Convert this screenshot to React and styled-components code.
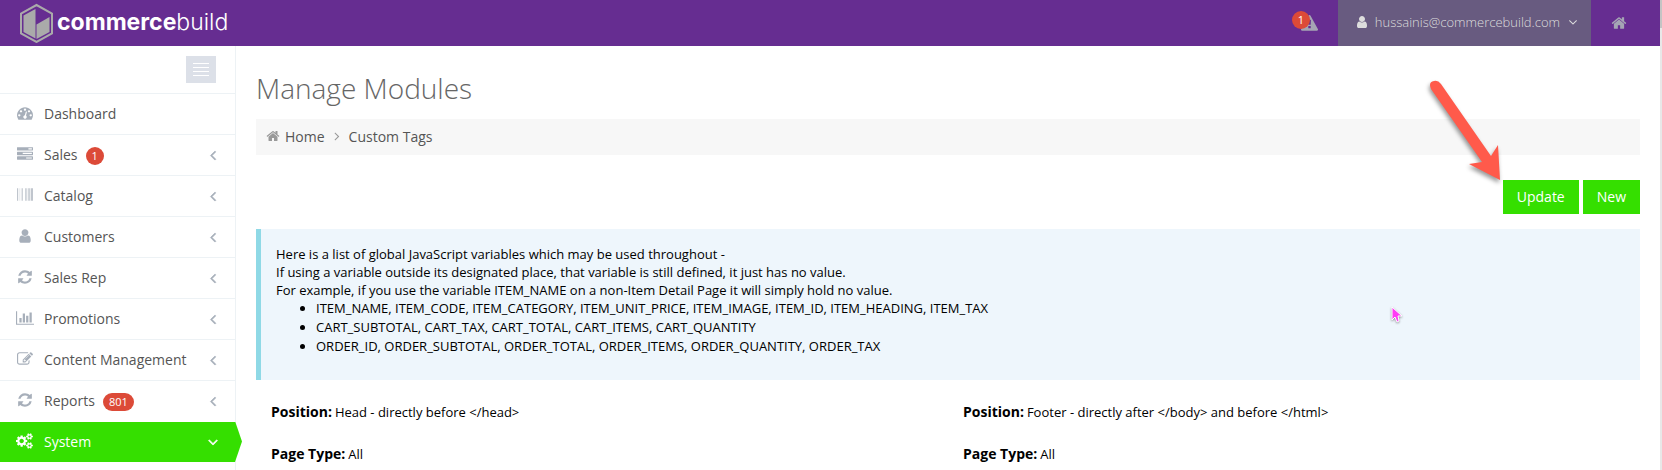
import React from "react";
import styled, { createGlobalStyle, css } from "styled-components";

const GlobalStyle = createGlobalStyle`
    * {
        box-sizing: border-box;
    }
    body {
        margin: 0;
        background-color: #fff;
        color: #000;
        font-family: "Open Sans", sans-serif;
        font-size: 13px;
        overflow: hidden;
    }
    a {
        color: inherit;
        text-decoration: none;
    }
    ul {
        list-style: none;
        margin: 0;
        padding: 0;
    }
`;

const Page = styled.div`
    display: grid;
    grid-template-columns: 1fr 2px;
    min-height: 100vh;
`;
const ScrollTrack = styled.div`
    background-color: #e8e8e8;
`;
const ScrollThumb = styled.div`
    height: 28px;
    background-color: #c4c4c4;
`;
const Header = styled.header`
    display: flex;
    align-items: center;
    height: 46px;
    padding-left: 19px;
    background-color: #662d91;
`;
const Logo = styled.a`
    display: flex;
    align-items: center;
    gap: 3px;
    height: 46px;
    color: #fff;
    font-family: Inter, sans-serif;
    font-size: 23px;
    font-weight: 300;
    line-height: 40px;
`;
const LogoText = styled.span`
    height: 42px;
`;
const LogoStrong = styled.b`
    font-weight: 700;
`;
const TopMenu = styled.nav`
    display: flex;
    margin-left: auto;
    height: 46px;
`;
const AlertLink = styled.a`
    position: relative;
    display: flex;
    align-items: center;
    padding: 0 20px;
    color: #a5a5b4;
`;
const AlertBadge = styled.span`
    position: absolute;
    top: 11px;
    left: 11px;
    width: 18px;
    height: 18px;
    border-radius: 9px;
    background-color: #dc4a38;
    color: #fff;
    font-size: 11px;
    line-height: 18px;
    text-align: center;
`;
const UserButton = styled.button`
    display: flex;
    align-items: center;
    gap: 6px;
    padding: 0 11px 2px 17px;
    border: 0;
    background-color: #685b80;
    color: #ddd;
    font-family: inherit;
    font-size: 13px;
    font-weight: 300;
`;
const HomeLink = styled.a`
    display: flex;
    align-items: center;
    padding: 0 33px 0 20px;
    color: #a5a5b4;
`;
const Body = styled.div`
    display: flex;
`;
const Sidebar = styled.aside`
    flex: 0 0 236px;
    border-right: 1px solid #edf2f5;
    min-height: calc(100vh - 46px);
`;
const TogglerRow = styled.div`
    display: flex;
    justify-content: flex-end;
    padding: 10px 19px 10px 0;
`;
const Toggler = styled.button`
    display: flex;
    flex-direction: column;
    justify-content: center;
    align-items: center;
    gap: 3px;
    width: 30px;
    height: 27px;
    padding: 0;
    border: 0;
    background-color: #dce0e8;
`;
const TogglerBar = styled.span`
    width: 16px;
    height: 1px;
    background-color: #fff;
`;
const MenuItem = styled.li`
    border-top: 1px solid #edf2f5;
    ${props => props.$active && css`
        margin-right: -7px;
        border-top-color: #fff;
        background: #35df00;
        background-clip: padding-box;
        clip-path: polygon(0 0, calc(100% - 7px) 0, 100% 50%, calc(100% - 7px) 100%, 0 100%);
    `}
`;
const MenuLink = styled.a`
    display: flex;
    align-items: center;
    height: 40px;
    padding: 0 ${props => (props.$active ? 21 : 14)}px 2px 17px;
    color: ${props => (props.$active ? "#fff" : "#555")};
    font-size: 14px;
`;
const MenuIcon = styled.span`
    display: flex;
    justify-content: center;
    width: 16px;
    margin-right: 11px;
    color: ${props => (props.$active ? "#fff" : "#a7afba")};
`;
const MenuBadge = styled.span`
    min-width: 18px;
    height: 18px;
    margin: 4px 0 0 8px;
    padding: 0 6px;
    border-radius: 9px;
    background-color: #dc4a38;
    color: #fff;
    font-size: 11px;
    line-height: 18px;
    text-align: center;
`;
const MenuArrow = styled.span`
    display: flex;
    margin-left: auto;
    padding-top: 2px;
    color: ${props => (props.$active ? "#fff" : "#a7afba")};
    stroke: currentColor;
    stroke-width: 70px;
`;
const Content = styled.main`
    flex: 1;
    min-width: 0;
    padding: 22px 20px 0;
`;
const Title = styled.h1`
    margin: 0 0 11px;
    color: #666;
    font-size: 28px;
    font-weight: 300;
    line-height: 40px;
`;
const Breadcrumb = styled.nav`
    display: flex;
    align-items: center;
    height: 36px;
    padding: 0 10px 2px;
    background-color: #f7f7f7;
    color: #999;
`;
const Crumb = styled.a`
    margin: 0 5px;
    color: #555;
    font-size: 14px;
`;
const Actions = styled.div`
    display: flex;
    justify-content: flex-end;
    gap: 4px;
    margin: 25px 0 15px;
`;
const Button = styled.button`
    height: 34px;
    padding: 0 14px 2px;
    border: 0;
    background-color: #35df00;
    color: #fff;
    font-family: inherit;
    font-size: 14px;
    font-weight: 500;
`;
const Note = styled.section`
    margin-bottom: 22px;
    padding: 16px 15px 24px;
    border-left: 5px solid #8fd9e6;
    background-color: #eef6fc;
`;
const NoteText = styled.p`
    margin: 0;
    line-height: 18px;
`;
const NoteList = styled.ul`
    padding-left: 40px;
    list-style: disc;
    line-height: 19px;
`;
const Columns = styled.div`
    display: grid;
    grid-template-columns: 1fr 1fr;
`;
const Column = styled.dl`
    display: grid;
    gap: 22px;
    margin: 0;
    padding: 0 15px;
    line-height: 20px;
`;
const Field = styled.div`
    display: flex;
    align-items: baseline;
    gap: 3px;
`;
const FieldName = styled.dt`
    font-size: 14px;
    font-weight: 700;
`;
const FieldValue = styled.dd`
    margin: 0;
`;
const ArrowMark = styled.svg`
    position: absolute;
    top: 76px;
    right: 147px;
    filter: drop-shadow(-1px 3px 2px rgba(0, 0, 0, 0.4));
    pointer-events: none;
`;
const Pointer = styled.svg`
    position: absolute;
    top: 306px;
    right: 259px;
    filter: drop-shadow(0 1px 1px rgba(0, 0, 0, 0.4));
    pointer-events: none;
`;

const paths = {
    dashboard: "M384 1152q0-53-37.5-90.5t-90.5-37.5-90.5 37.5-37.5 90.5 37.5 90.5 90.5 37.5 90.5-37.5 37.5-90.5zm192-448q0-53-37.5-90.5t-90.5-37.5-90.5 37.5-37.5 90.5 37.5 90.5 90.5 37.5 90.5-37.5 37.5-90.5zm428 481l101-382q6-26-7.5-48.5t-38.5-29.5-48 6.5-30 39.5l-101 382q-60 5-107 43.5t-63 98.5q-20 77 20 146t117 89 146-20 89-117q16-60-6-117t-72-91zm660-33q0-53-37.5-90.5t-90.5-37.5-90.5 37.5-37.5 90.5 37.5 90.5 90.5 37.5 90.5-37.5 37.5-90.5zm-640-640q0-53-37.5-90.5t-90.5-37.5-90.5 37.5-37.5 90.5 37.5 90.5 90.5 37.5 90.5-37.5 37.5-90.5zm448 192q0-53-37.5-90.5t-90.5-37.5-90.5 37.5-37.5 90.5 37.5 90.5 90.5 37.5 90.5-37.5 37.5-90.5zm320 448q0 261-141 483-19 29-54 29h-1402q-35 0-54-29-141-221-141-483 0-182 71-348t191-286 286-191 348-71 348 71 286 191 191 286 71 348z",
    tasks: "M1024 1408h640v-128h-640v128zm-384-512h1024v-128h-1024v128zm640-512h384v-128h-384v128zm512 832v256q0 26-19 45t-45 19h-1664q-26 0-45-19t-19-45v-256q0-26 19-45t45-19h1664q26 0 45 19t19 45zm0-512v256q0 26-19 45t-45 19h-1664q-26 0-45-19t-19-45v-256q0-26 19-45t45-19h1664q26 0 45 19t19 45zm0-512v256q0 26-19 45t-45 19h-1664q-26 0-45-19t-19-45v-256q0-26 19-45t45-19h1664q26 0 45 19t19 45z",
    barcode: "M63 1536h-63v-1408h63v1408zm63-1h-32v-1407h32v1407zm220 0h-31v-1407h31v1407zm157 0h-31v-1407h31v1407zm157 0h-62v-1407h62v1407zm315 0h-62v-1407h62v1407zm158 0h-63v-1407h63v1407zm157 0h-63v-1407h63v1407zm157 0h-63v-1407h63v1407zm189 0h-94v-1407h94v1407zm62 0h-31v-1407h31v1407zm94 1h-62v-1408h62v1408z",
    user: "M1536 1399q0 109-62.5 187t-150.5 78h-854q-88 0-150.5-78t-62.5-187q0-85 8.5-160.5t31.5-152 58.5-131 94-89 134.5-34.5q131 128 313 128t313-128q76 0 134.5 34.5t94 89 58.5 131 31.5 152 8.5 160.5zm-256-887q0 159-112.5 271.5t-271.5 112.5-271.5-112.5-112.5-271.5 112.5-271.5 271.5-112.5 271.5 112.5 112.5 271.5z",
    refresh: "M1639 1056q0 5-1 7-64 268-268 434.5t-478 166.5q-146 0-282.5-55t-243.5-157l-129 129q-19 19-45 19t-45-19-19-45v-448q0-26 19-45t45-19h448q26 0 45 19t19 45-19 45l-137 137q71 66 161 102t187 36q134 0 250-65t186-179q11-17 53-117 8-23 30-23h192q13 0 22.5 9.5t9.5 22.5zm25-800v448q0 26-19 45t-45 19h-448q-26 0-45-19t-19-45 19-45l138-138q-148-137-349-137-134 0-250 65t-186 179q-11 17-53 117-8 23-30 23h-199q-13 0-22.5-9.5t-9.5-22.5v-7q65-268 270-434.5t480-166.5q146 0 284 55.5t245 156.5l130-129q19-19 45-19t45 19 19 45z",
    chart: "M640 896v512h-256v-512h256zm384-512v1024h-256v-1024h256zm1024 1152v128h-2048v-1536h128v1408h1920zm-640-896v768h-256v-768h256zm384-384v1152h-256v-1152h256z",
    edit: "M888 1184l116-116-152-152-116 116v56h96v96h56zm440-720q-16-16-33 1l-350 350q-17 17-1 33t33-1l350-350q17-17 1-33zm80 594v190q0 119-84.5 203.5t-203.5 84.5h-832q-119 0-203.5-84.5t-84.5-203.5v-832q0-119 84.5-203.5t203.5-84.5h832q63 0 117 25 15 7 18 23 3 17-9 29l-49 49q-14 14-32 8-23-6-45-6h-832q-66 0-113 47t-47 113v832q0 66 47 113t113 47h832q66 0 113-47t47-113v-126q0-13 9-22l64-64q15-15 35-7t20 29zm-96-738l288 288-672 672h-288v-288zm444 132l-92 92-288-288 92-92q28-28 68-28t68 28l152 152q28 28 28 68t-28 68z",
    cogs: "M896 896q0-106-75-181t-181-75-181 75-75 181 75 181 181 75 181-75 75-181zm768 512q0-52-38-90t-90-38-90 38-38 90q0 53 37.5 90.5t90.5 37.5 90.5-37.5 37.5-90.5zm0-1024q0-52-38-90t-90-38-90 38-38 90q0 53 37.5 90.5t90.5 37.5 90.5-37.5 37.5-90.5zm-384 421v185q0 10-7 19.5t-16 10.5l-155 24q-11 35-32 76 34 48 90 115 7 11 7 20 0 12-7 19-23 30-82.5 89.5t-78.5 59.5q-11 0-21-7l-115-90q-37 19-77 31-11 108-23 155-7 24-30 24h-186q-11 0-20-7.5t-10-17.5l-23-153q-34-10-75-31l-118 89q-7 7-20 7-11 0-21-8-144-133-144-160 0-9 7-19 10-14 41-53t47-61q-23-44-35-82l-152-24q-10-1-17-9.5t-7-19.5v-185q0-10 7-19.5t16-10.5l155-24q11-35 32-76-34-48-90-115-7-11-7-20 0-12 7-20 22-30 82-89t79-59q11 0 21 7l115 90q34-18 77-32 11-108 23-154 7-24 30-24h186q11 0 20 7.5t10 17.5l23 153q34 10 75 31l118-89q8-7 20-7 11 0 21 8 144 133 144 160 0 8-7 19-12 16-42 54t-45 60q23 48 34 82l152 23q10 2 17 10.5t7 19.5zm640 533v140q0 16-149 31-12 27-30 52 51 113 51 138 0 4-4 7-122 71-124 71-8 0-46-47t-52-68q-20 2-30 2t-30-2q-14 21-52 68t-46 47q-2 0-124-71-4-3-4-7 0-25 51-138-18-25-30-52-149-15-149-31v-140q0-16 149-31 13-29 30-52-51-113-51-138 0-4 4-7 4-2 35-20t59-34 30-16q8 0 46 46.5t52 67.5q20-2 30-2t30 2q51-71 92-112l6-2q4 0 124 70 4 3 4 7 0 25-51 138 17 23 30 52 149 15 149 31zm0-1024v140q0 16-149 31-12 27-30 52 51 113 51 138 0 4-4 7-122 71-124 71-8 0-46-47t-52-68q-20 2-30 2t-30-2q-14 21-52 68t-46 47q-2 0-124-71-4-3-4-7 0-25 51-138-18-25-30-52-149-15-149-31v-140q0-16 149-31 13-29 30-52-51-113-51-138 0-4 4-7 4-2 35-20t59-34 30-16q8 0 46 46.5t52 67.5q20-2 30-2t30 2q51-71 92-112l6-2q4 0 124 70 4 3 4 7 0 25-51 138 17 23 30 52 149 15 149 31z",
    warning: "M1024 1375v-190q0-14-9.5-23.5t-22.5-9.5h-192q-13 0-22.5 9.5t-9.5 23.5v190q0 14 9.5 23.5t22.5 9.5h192q13 0 22.5-9.5t9.5-23.5zm-2-374l18-459q0-12-10-19-13-11-24-11h-220q-11 0-24 11-10 7-10 21l17 457q0 10 10 16.5t24 6.5h185q14 0 23.5-6.5t10.5-16.5zm-14-934l768 1408q35 63-2 126-17 29-46.5 46t-63.5 17h-1536q-34 0-63.5-17t-46.5-46q-37-63-2-126l768-1408q17-31 47-49t65-18 65 18 47 49z",
    home: "M1472 992v480q0 26-19 45t-45 19h-384v-384h-256v384h-384q-26 0-45-19t-19-45v-480q0-1 .5-3t.5-3l575-474 575 474q1 2 1 6zm223-69l-62 74q-8 9-21 11h-3q-13 0-21-7l-692-577-692 577q-12 8-24 7-13-2-21-11l-62-74q-8-10-7-23.5t11-21.5l719-599q32-26 76-26t76 26l244 204v-195q0-14 9-23t23-9h192q14 0 23 9t9 23v408l219 182q10 8 11 21.5t-7 23.5z",
    left: "M1203 544q0 13-10 23l-393 393 393 393q10 10 10 23t-10 23l-50 50q-10 10-23 10t-23-10l-466-466q-10-10-10-23t10-23l466-466q10-10 23-10t23 10l50 50q10 10 10 23z",
    right: "M1171 960q0 13-10 23l-466 466q-10 10-23 10t-23-10l-50-50q-10-10-10-23t10-23l393-393-393-393q-10-10-10-23t10-23l50-50q10-10 23-10t23 10l466 466q10 10 10 23z",
    down: "M1395 736q0 13-10 23l-466 466q-10 10-23 10t-23-10l-466-466q-10-10-10-23t10-23l50-50q10-10 23-10t23 10l393 393 393-393q10-10 23-10t23 10l50 50q10 10 10 23z",
};

const IconSvg = styled.svg`
    flex: none;
    fill: currentColor;
`;

const Icon = ({ name, size = 16, wide }) => (
    <IconSvg
        width={wide ? Math.round(size * 8 / 7) : size}
        height={size}
        viewBox={`0 0 ${wide ? 2048 : 1792} 1792`}
        aria-hidden="true"
    >
        <path d={paths[name]} />
    </IconSvg>
);

const menu = [
    { label: "Dashboard", icon: <Icon name="dashboard" />, leaf: true },
    { label: "Sales", icon: <Icon name="tasks" />, badge: 1 },
    { label: "Catalog", icon: <Icon name="barcode" /> },
    { label: "Customers", icon: <Icon name="user" /> },
    { label: "Sales Rep", icon: <Icon name="refresh" /> },
    { label: "Promotions", icon: <Icon name="chart" wide /> },
    { label: "Content Management", icon: <Icon name="edit" /> },
    { label: "Reports", icon: <Icon name="refresh" />, badge: 801 },
    { label: "System", icon: <Icon name="cogs" wide />, active: true },
];

const variables = [
    "ITEM_NAME, ITEM_CODE, ITEM_CATEGORY, ITEM_UNIT_PRICE, ITEM_IMAGE, ITEM_ID, ITEM_HEADING, ITEM_TAX",
    "CART_SUBTOTAL, CART_TAX, CART_TOTAL, CART_ITEMS, CART_QUANTITY",
    "ORDER_ID, ORDER_SUBTOTAL, ORDER_TOTAL, ORDER_ITEMS, ORDER_QUANTITY, ORDER_TAX",
];

const modules = [
    { position: "Head - directly before </head>", type: "All" },
    { position: "Footer - directly after </body> and before </html>", type: "All" },
];

const LogoMark = () => (
    <svg width="35" height="40" viewBox="0 0 35 40" aria-hidden="true">
        <path d="M17.500 2L33 10.500V30.500L17.500 39L2 30.500V10.500Z" fill="none" stroke="#aaa" strokeWidth="2" />
        <path d="M4.500 12.500L16.500 6V35.500L4.500 29Z" fill="#aaa" />
        <path d="M17.500 21.500L30.500 14V29L17.500 36Z" fill="#aaa" />
    </svg>
);

const TopBar = () => (
    <Header>
        <Logo href="#">
            <LogoMark />
            <LogoText><LogoStrong>commerce</LogoStrong>build</LogoText>
        </Logo>
        <TopMenu>
            <AlertLink href="#" aria-label="Alerts">
                <Icon name="warning" size={17} />
                <AlertBadge>1</AlertBadge>
            </AlertLink>
            <UserButton type="button">
                <Icon name="user" size={14} />
                hussainis@commercebuild.com
                <Icon name="down" size={14} />
            </UserButton>
            <HomeLink href="#" aria-label="Home">
                <Icon name="home" />
            </HomeLink>
        </TopMenu>
    </Header>
);

const SideMenu = () => (
    <Sidebar>
        <TogglerRow>
            <Toggler type="button" aria-label="Toggle menu">
                <TogglerBar />
                <TogglerBar />
                <TogglerBar />
                <TogglerBar />
            </Toggler>
        </TogglerRow>
        <ul>
            {menu.map(item => (
                <MenuItem key={item.label} $active={item.active}>
                    <MenuLink href="#" $active={item.active}>
                        <MenuIcon $active={item.active}>{item.icon}</MenuIcon>
                        {item.label}
                        {item.badge && <MenuBadge>{item.badge}</MenuBadge>}
                        {!item.leaf && (
                            <MenuArrow $active={item.active}>
                                <Icon name={item.active ? "down" : "left"} />
                            </MenuArrow>
                        )}
                    </MenuLink>
                </MenuItem>
            ))}
        </ul>
    </Sidebar>
);

const App = () => (
    <>
        <GlobalStyle />
        <Page>
            <div>
                <TopBar />
                <Body>
                    <SideMenu />
                    <Content>
                        <Title>Manage Modules</Title>
                        <Breadcrumb aria-label="Breadcrumb">
                            <Icon name="home" size={14} />
                            <Crumb href="#">Home</Crumb>
                            <Icon name="right" size={14} />
                            <Crumb href="#">Custom Tags</Crumb>
                        </Breadcrumb>
                        <Actions>
                            <Button type="button">Update</Button>
                            <Button type="button">New</Button>
                        </Actions>
                        <Note>
                            <NoteText>Here is a list of global JavaScript variables which may be used throughout -</NoteText>
                            <NoteText>If using a variable outside its designated place, that variable is still defined, it just has no value.</NoteText>
                            <NoteText>For example, if you use the variable ITEM_NAME on a non-Item Detail Page it will simply hold no value.</NoteText>
                            <NoteList>
                                {variables.map(line => <li key={line}>{line}</li>)}
                            </NoteList>
                        </Note>
                        <Columns>
                            {modules.map(module => (
                                <Column key={module.position}>
                                    <Field>
                                        <FieldName>Position:</FieldName>
                                        <FieldValue>{module.position}</FieldValue>
                                    </Field>
                                    <Field>
                                        <FieldName>Page Type:</FieldName>
                                        <FieldValue>{module.type}</FieldValue>
                                    </Field>
                                </Column>
                            ))}
                        </Columns>
                    </Content>
                </Body>
            </div>
            <ScrollTrack>
                <ScrollThumb />
            </ScrollTrack>
        </Page>
        <ArrowMark width="90" height="110" viewBox="0 0 90 110" aria-hidden="true">
            <path d="M6 13Q3 6 9 5Q13 4 16 8L66 80L73 69L75 104L44 88L57 86Z" fill="#ff5a4b" />
        </ArrowMark>
        <Pointer width="12" height="18" viewBox="0 0 12 18" aria-hidden="true">
            <path d="M1 1V14L4 11L6 16L8 15L7 10H11Z" fill="#ff3cf5" stroke="#fff" />
        </Pointer>
    </>
);

export default App;
